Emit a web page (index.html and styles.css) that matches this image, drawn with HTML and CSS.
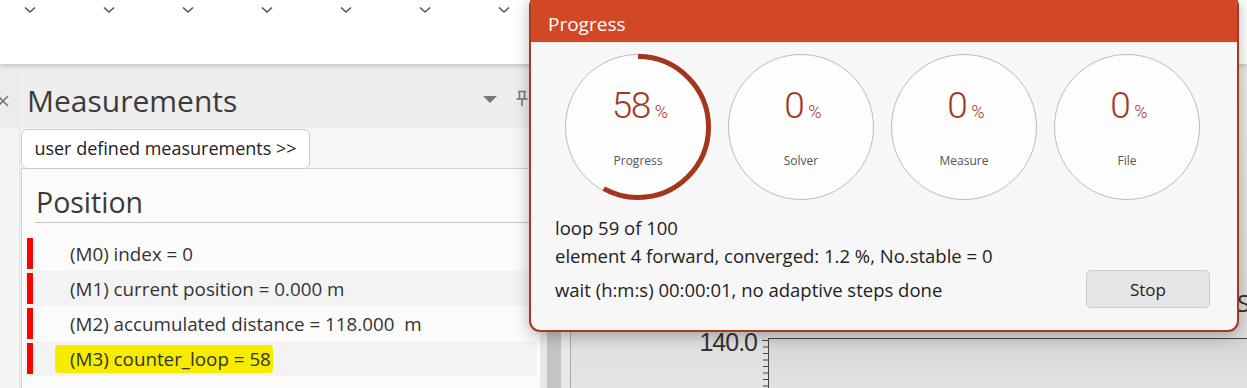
FILE: index.html
```html
<!DOCTYPE html>
<html lang="en">
<head>
    <meta charset="UTF-8">
    <title>Progress</title>
    <link rel="stylesheet" href="styles.css">
</head>
<body>
    <div class="toolbar">
        <svg viewBox="0 0 12 8"><path d="M1 1.5 L6 6 L11 1.5"/></svg>
        <svg viewBox="0 0 12 8"><path d="M1 1.5 L6 6 L11 1.5"/></svg>
        <svg viewBox="0 0 12 8"><path d="M1 1.5 L6 6 L11 1.5"/></svg>
        <svg viewBox="0 0 12 8"><path d="M1 1.5 L6 6 L11 1.5"/></svg>
        <svg viewBox="0 0 12 8"><path d="M1 1.5 L6 6 L11 1.5"/></svg>
        <svg viewBox="0 0 12 8"><path d="M1 1.5 L6 6 L11 1.5"/></svg>
        <svg viewBox="0 0 12 8"><path d="M1 1.5 L6 6 L11 1.5"/></svg>
    </div>

    <div class="workspace">
        <div class="side-strip">
            <div class="side-head">
                <svg class="close" viewBox="0 0 12 12"><path d="M-2 1 L8 11 M8 1 L-2 11"/></svg>
            </div>
            <div class="side-rest"></div>
        </div>

        <div class="dock">
            <div class="dock-head">
                <h2>Measurements</h2>
                <svg class="dock-menu" viewBox="0 0 14 7"><polygon points="0,0 14,0 7,7"/></svg>
                <svg class="dock-pin" viewBox="0 0 12 16"><path d="M2 1.5h8 M3.5 1.5v7 M8.5 1.5v7 M0.5 9h11 M6 9v7"/></svg>
            </div>
            <div class="dock-bar">
                <button class="btn-user">user defined measurements &gt;&gt;</button>
            </div>
            <div class="dock-pane">
                <h3>Position</h3>
                <ul class="meas-list">
                    <li><span class="bar"></span><span class="meas">(M0) index = 0</span></li>
                    <li><span class="bar"></span><span class="meas">(M1) current position = 0.000 m</span></li>
                    <li><span class="bar"></span><span class="meas">(M2) accumulated distance = 118.000&nbsp; m</span></li>
                    <li><span class="bar"></span><span class="meas marked">(M3) counter_loop = 58</span></li>
                </ul>
            </div>
        </div>

        <div class="scroll-col"><div class="scroll-thumb"></div></div>

        <div class="chart">
            <div class="chart-top"><span class="chart-title">S</span></div>
            <div class="plot-row">
                <div class="y-axis">
                    <span class="y-label">140.0</span>
                    <svg class="ticks" viewBox="0 0 6 50"><path d="M0 2.5h6 M1 9h5 M1 15.5h5 M1 22h5 M1 28.5h5 M1 35h5 M1 41.5h5 M1 48h5"/></svg>
                </div>
                <div class="plot"></div>
            </div>
        </div>
    </div>

    <div class="progress-dialog">
        <div class="dialog-head">Progress</div>
        <div class="dialog-body">
            <div class="gauges">
                <div class="gauge">
                    <svg viewBox="0 0 146 146">
                        <circle class="ring" cx="73" cy="73" r="72.5"/>
                        <circle class="arc" cx="73" cy="73" r="70.5" stroke-dasharray="256.9 443" transform="rotate(-90 73 73)"/>
                    </svg>
                    <div class="gauge-text">
                        <div class="gauge-value">58<small>%</small></div>
                        <div class="gauge-name">Progress</div>
                    </div>
                </div>
                <div class="gauge">
                    <svg viewBox="0 0 146 146"><circle class="ring" cx="73" cy="73" r="72.5"/></svg>
                    <div class="gauge-text">
                        <div class="gauge-value">0<small>%</small></div>
                        <div class="gauge-name">Solver</div>
                    </div>
                </div>
                <div class="gauge">
                    <svg viewBox="0 0 146 146"><circle class="ring" cx="73" cy="73" r="72.5"/></svg>
                    <div class="gauge-text">
                        <div class="gauge-value">0<small>%</small></div>
                        <div class="gauge-name">Measure</div>
                    </div>
                </div>
                <div class="gauge">
                    <svg viewBox="0 0 146 146"><circle class="ring" cx="73" cy="73" r="72.5"/></svg>
                    <div class="gauge-text">
                        <div class="gauge-value">0<small>%</small></div>
                        <div class="gauge-name">File</div>
                    </div>
                </div>
            </div>
            <div class="info">
                <div class="info-line">loop 59 of 100</div>
                <div class="info-line">element 4 forward, converged: 1.2 %, No.stable = 0</div>
                <div class="info-last">
                    <span>wait (h:m:s) 00:00:01, no adaptive steps done</span>
                    <button class="btn-stop">Stop</button>
                </div>
            </div>
        </div>
    </div>
</body>
</html>
```

FILE: styles.css
```css
body {
    margin: 0;
    width: 1247px;
    height: 388px;
    overflow: hidden;
    position: relative;
    font-family: "Open Sans", "Noto Sans", sans-serif;
    background-color: #f0f0f0;
    color: #333;
}

/* top toolbar */
.toolbar {
    height: 64px;
    box-sizing: border-box;
    padding: 6px 0 0 24px;
    display: flex;
    gap: 67px;
    background-color: #fff;
    box-shadow: 0 2px 5px rgba(0, 0, 0, 0.18);
    position: relative;
    z-index: 1;
}
.toolbar svg {
    width: 12px;
    height: 8px;
}
.toolbar path {
    fill: none;
    stroke: #555;
    stroke-width: 1.6;
}

.workspace {
    display: flex;
    height: 324px;
}

/* left strip */
.side-strip {
    width: 20px;
    flex-shrink: 0;
    display: flex;
    flex-direction: column;
}
.side-head {
    height: 64px;
    background-color: #ececec;
    overflow: hidden;
}
.close {
    display: block;
    width: 12px;
    height: 12px;
    margin-top: 31px;
}
.close path {
    fill: none;
    stroke: #777;
    stroke-width: 1.6;
}
.side-rest {
    flex: 1;
    background-color: #f4f4f4;
    border-right: 1px solid #e4e4e4;
}

/* measurements dock */
.dock {
    width: 520px;
    flex-shrink: 0;
    display: flex;
    flex-direction: column;
}
.dock-head {
    height: 64px;
    display: flex;
    align-items: center;
    padding-left: 7px;
    background-color: #eeeeee;
}
.dock-head h2 {
    flex: 1;
    margin: 8px 0 0 0;
    font-size: 30px;
    font-weight: 400;
    color: #3b3b3b;
}
.dock-menu {
    width: 14px;
    height: 7px;
    fill: #777;
    margin-top: 6px;
}
.dock-pin {
    width: 12px;
    height: 16px;
    margin: 4px 12px 0 19px;
}
.dock-pin path {
    fill: none;
    stroke: #777;
    stroke-width: 1.6;
}
.dock-bar {
    height: 40px;
    box-sizing: border-box;
    padding: 1px 0 0 1px;
    background-color: #f6f6f6;
}
.btn-user {
    width: 289px;
    height: 40px;
    padding: 0 0 2px 0;
    font-family: inherit;
    font-size: 18px;
    color: #222;
    background-color: #fff;
    border: 1px solid #c9c9c9;
    border-radius: 6px;
    position: relative;
    z-index: 1;
}
.dock-pane {
    flex: 1;
    margin-left: 1px;
    background-color: #fbfbfb;
    border-left: 1px solid #d0d0d0;
    border-top: 1px solid #d0d0d0;
}
.dock-pane h3 {
    margin: 17px 10px 0 13px;
    padding: 0 0 4px 1px;
    font-size: 28.5px;
    font-weight: 400;
    line-height: 32px;
    color: #3a3a3a;
    border-bottom: 1px solid #c8c8c8;
}
.meas-list {
    list-style: none;
    margin: 13px 3px 0 3px;
    padding: 0;
}
.meas-list li {
    height: 35px;
    display: flex;
    align-items: center;
}
.meas-list li:nth-child(even) {
    background-color: #f3f3f3;
}
.bar {
    width: 6px;
    height: 31px;
    margin-left: 2px;
    background-color: #ff0000;
}
.meas {
    margin-left: 37px;
    font-size: 18.8px;
    color: #333;
}
.marked {
    margin-left: 22px;
    padding: 1px 2px 1px 15px;
    background-color: #f6ec00;
    border-radius: 4px;
}

/* scrollbar between dock and chart */
.scroll-col {
    width: 31px;
    flex-shrink: 0;
    box-sizing: border-box;
    padding-left: 7px;
    background-color: #e8e8e8;
    border-right: 1px solid #a9a9a9;
}
.scroll-thumb {
    width: 14px;
    height: 100%;
    background-color: #c4c4c4;
}

/* chart behind the dialog */
.chart {
    flex: 1;
    min-width: 0;
    overflow: hidden;
    display: flex;
    flex-direction: column;
    background: linear-gradient(#ececec, #dedede 80%, #e4e4e4);
}
.chart-top {
    height: 267px;
    box-sizing: border-box;
    padding: 222px 0 0 666px;
    white-space: nowrap;
}
.chart-title {
    font-size: 24px;
    color: #333;
}
.plot-row {
    flex: 1;
    display: flex;
}
.y-axis {
    width: 197px;
    flex-shrink: 0;
    display: flex;
    justify-content: flex-end;
}
.y-label {
    margin: 0 5px 0 0;
    font-family: "Liberation Sans", sans-serif;
    font-size: 25px;
    line-height: 22px;
    letter-spacing: -1px;
    color: #333;
}
.ticks {
    width: 6px;
    height: 50px;
    margin-top: 7px;
}
.ticks path {
    stroke: #444;
    stroke-width: 1;
}
.plot {
    flex: 1;
    margin-top: 7px;
    border-top: 1px solid #444;
    border-left: 1px solid #444;
    background: linear-gradient(#d6d6d6, #e2e2e2);
}

/* progress dialog */
.progress-dialog {
    position: absolute;
    left: 529px;
    top: -5px;
    width: 710px;
    box-sizing: border-box;
    border: 2px solid #a9391d;
    border-radius: 11px;
    background-color: #f7f7f7;
    overflow: hidden;
    box-shadow: 0 4px 16px rgba(0, 0, 0, 0.28);
    z-index: 2;
}
.dialog-head {
    height: 46px;
    box-sizing: border-box;
    padding: 15px 0 0 17px;
    font-size: 19px;
    line-height: 24px;
    color: #fff;
    background-color: #d24726;
    border-bottom: 1px solid #f4e6e2;
}
.dialog-body {
    padding: 11px 27px 22px 24px;
}
.gauges {
    display: flex;
    gap: 17px;
    margin-left: 10px;
}
.gauge {
    width: 146px;
    height: 146px;
    display: grid;
}
.gauge svg,
.gauge-text {
    grid-area: 1 / 1;
}
.gauge svg {
    width: 146px;
    height: 146px;
}
.ring {
    fill: #fdfdfd;
    stroke: #bcbcbc;
    stroke-width: 1;
}
.arc {
    fill: none;
    stroke: #a3361c;
    stroke-width: 5;
}
.gauge-text {
    display: flex;
    flex-direction: column;
    align-items: center;
}
.gauge-value {
    margin: 30px 0 0 4px;
    font-family: "Roboto", "Open Sans", sans-serif;
    font-size: 37px;
    font-weight: 300;
    line-height: 44px;
    letter-spacing: -1.5px;
    color: #a3391e;
}
.gauge-value small {
    margin-left: 5px;
    font-size: 18px;
    letter-spacing: 0;
}
.gauge-name {
    margin-top: 18px;
    font-size: 12px;
    color: #555;
}
.info {
    margin-top: 14px;
    font-size: 18.5px;
    color: #222;
}
.info-line {
    line-height: 28px;
}
.info-last {
    height: 38px;
    display: flex;
    align-items: center;
    justify-content: space-between;
}
.btn-stop {
    width: 124px;
    height: 38px;
    font-family: inherit;
    font-size: 17px;
    color: #222;
    background-color: #e5e5e5;
    border: 1px solid #cccccc;
    border-radius: 5px;
}
```
